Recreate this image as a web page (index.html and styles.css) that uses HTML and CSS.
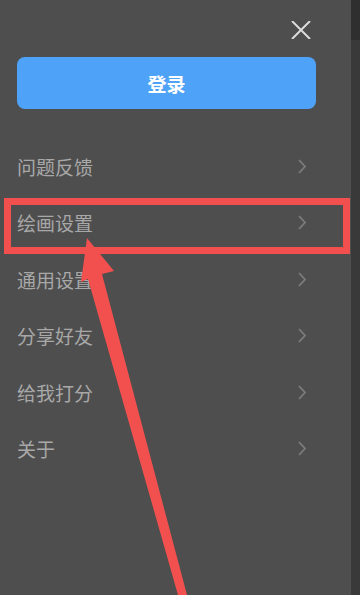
FILE: index.html
```html
<!DOCTYPE html>
<html lang="zh">
<head>
<meta charset="utf-8">
<link rel="stylesheet" href="styles.css">
</head>
<body>
<div class="screen">
  <div class="panel">
    <div class="top">
      <svg class="close" width="20" height="18" viewBox="0 0 20 18"><path d="M1 0 L19 18 M19 0 L1 18" stroke="#dcdcdc" stroke-width="2" fill="none"/></svg>
    </div>
    <button class="login">登录</button>
    <ul class="menu">
      <li class="row"><span>问题反馈</span><svg class="chev" width="8" height="15" viewBox="0 0 8 15"><path d="M1 1 L7 7.5 L1 14" stroke="#7c7c7c" stroke-width="1.8" fill="none"/></svg></li>
      <li class="row"><span>绘画设置</span><svg class="chev" width="8" height="15" viewBox="0 0 8 15"><path d="M1 1 L7 7.5 L1 14" stroke="#7c7c7c" stroke-width="1.8" fill="none"/></svg></li>
      <li class="row"><span>通用设置</span><svg class="chev" width="8" height="15" viewBox="0 0 8 15"><path d="M1 1 L7 7.5 L1 14" stroke="#7c7c7c" stroke-width="1.8" fill="none"/></svg></li>
      <li class="row"><span>分享好友</span><svg class="chev" width="8" height="15" viewBox="0 0 8 15"><path d="M1 1 L7 7.5 L1 14" stroke="#7c7c7c" stroke-width="1.8" fill="none"/></svg></li>
      <li class="row"><span>给我打分</span><svg class="chev" width="8" height="15" viewBox="0 0 8 15"><path d="M1 1 L7 7.5 L1 14" stroke="#7c7c7c" stroke-width="1.8" fill="none"/></svg></li>
      <li class="row"><span>关于</span><svg class="chev" width="8" height="15" viewBox="0 0 8 15"><path d="M1 1 L7 7.5 L1 14" stroke="#7c7c7c" stroke-width="1.8" fill="none"/></svg></li>
    </ul>
  </div>
  <div class="strip"><div class="strip-top"></div></div>
  <div class="highlight"></div>
  <svg class="arrow" width="360" height="595" viewBox="0 0 360 595"><polygon points="87,238 114,271 102,274 187,595 178,595 88,279 81,282" fill="#f2504e"/></svg>
</div>
</body>
</html>
```
FILE: styles.css
```css
html, body {
  margin: 0;
  padding: 0;
  background: #4e4e4e;
}
.screen {
  position: relative;
  display: flex;
  width: 360px;
  height: 595px;
  overflow: hidden;
  font-family: "Noto Sans CJK SC", "Noto Sans", sans-serif;
}
.panel {
  width: 351px;
  flex: none;
  background: #4e4e4e;
  box-sizing: border-box;
  padding: 21px 0 0 17px;
}
.top {
  display: flex;
  justify-content: flex-end;
  padding-right: 40px;
  height: 18px;
}
.close { display: block; }
.login {
  display: block;
  margin-top: 18px;
  width: 299px;
  height: 52px;
  border: none;
  border-radius: 8px;
  background: #4ea2f7;
  color: #ffffff;
  font-family: inherit;
  font-size: 19px;
  font-weight: 700;
  padding: 0;
}
.menu {
  list-style: none;
  margin: 29px 0 0;
  padding: 0;
}
.row {
  display: flex;
  align-items: center;
  justify-content: space-between;
  height: 56.5px;
  padding-right: 45px;
  color: #a8a8a8;
  font-size: 19px;
}
.chev { display: block; }
.strip {
  flex: 1;
  background: #393939;
}
.strip-top {
  height: 40px;
  background: #2f2f2f;
}
.highlight {
  position: absolute;
  left: 4px;
  top: 198px;
  width: 346px;
  height: 56px;
  box-sizing: border-box;
  border: 7px solid #f2504e;
}
.arrow {
  position: absolute;
  left: 0;
  top: 0;
}
```
